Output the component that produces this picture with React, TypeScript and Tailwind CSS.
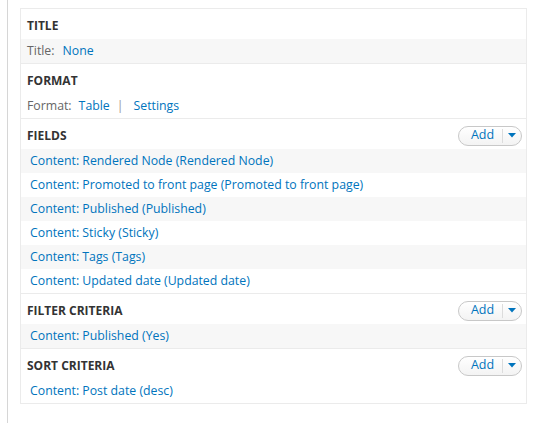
import React from "react";

const font = { fontFamily: '"Open Sans", "DejaVu Sans", sans-serif' };

function AddButton() {
  return (
    <div className="flex items-center h-[20px] w-[64px] rounded-full border border-[#c8c8c8] bg-gradient-to-b from-white to-[#f3f3f3] text-[#0074bd] text-[12.5px]">
      <span className="flex-1 text-center pl-[4px]">Add</span>
      <span className="h-[14px] w-px bg-[#dcdcdc]" />
      <span className="w-[18px] flex justify-center">
        <svg width="8" height="5" viewBox="0 0 8 5">
          <path d="M0 0 L8 0 L4 4.5 Z" fill="#0074bd" />
        </svg>
      </span>
    </div>
  );
}

function Header({ title, add }: { title: string; add?: boolean }) {
  return (
    <div className="flex items-center justify-between h-[30px] pl-[6px] pr-[4px] pt-[3px]">
      <span className="font-bold text-[12px] text-[#333]">{title}</span>
      {add && <AddButton />}
    </div>
  );
}

function Row({ children, grey, indent }: { children: React.ReactNode; grey?: boolean; indent?: boolean }) {
  return (
    <div className={`flex items-center h-[24px] text-[12.3px] ${indent ? "pl-[9px]" : "pl-[6px]"} ${grey ? "bg-[#f7f7f7]" : "bg-white"}`}>
      {children}
    </div>
  );
}

const Link = ({ children }: { children: React.ReactNode }) => (
  <span className="text-[#0074bd]">{children}</span>
);

export default function App() {
  const fields = [
    "Content: Rendered Node (Rendered Node)",
    "Content: Promoted to front page (Promoted to front page)",
    "Content: Published (Published)",
    "Content: Sticky (Sticky)",
    "Content: Tags (Tags)",
    "Content: Updated date (Updated date)",
  ];
  return (
    <div className="min-h-[423px] bg-white" style={font}>
      <div className="ml-[7px] min-h-[423px] border-l border-[#d6d6d6] pl-[12px] pt-[8px]">
        <div className="w-[507px] border border-[#ebebeb]">
          <Header title="TITLE" />
          <Row grey>
            <span className="text-[#666]">Title:</span>
            <span className="ml-[8px]"><Link>None</Link></span>
          </Row>
          <div className="border-t border-[#ebebeb]">
            <Header title="FORMAT" />
            <Row>
              <span className="text-[#666]">Format:</span>
              <span className="ml-[7px]"><Link>Table</Link></span>
              <span className="ml-[7px] text-[#999]">|</span>
              <span className="ml-[10px]"><Link>Settings</Link></span>
            </Row>
          </div>
          <div className="border-t border-[#ebebeb]">
            <Header title="FIELDS" add />
            {fields.map((f, i) => (
              <Row key={f} grey={i % 2 === 0} indent>
                <Link>{f}</Link>
              </Row>
            ))}
          </div>
          <div className="border-t border-[#ebebeb]">
            <Header title="FILTER CRITERIA" add />
            <Row grey indent>
              <Link>Content: Published (Yes)</Link>
            </Row>
          </div>
          <div className="border-t border-[#ebebeb]">
            <Header title="SORT CRITERIA" add />
            <Row indent>
              <Link>Content: Post date (desc)</Link>
            </Row>
          </div>
        </div>
      </div>
    </div>
  );
}
